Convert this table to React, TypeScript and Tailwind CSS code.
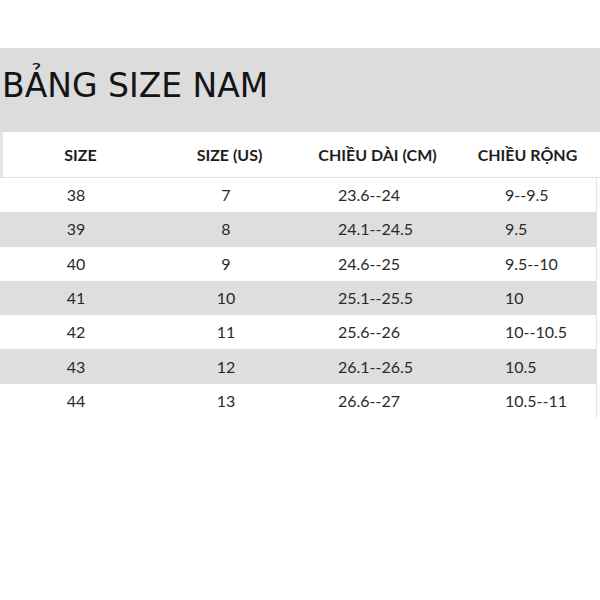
const rows = [
  ["38", "7", "23.6--24", "9--9.5"],
  ["39", "8", "24.1--24.5", "9.5"],
  ["40", "9", "24.6--25", "9.5--10"],
  ["41", "10", "25.1--25.5", "10"],
  ["42", "11", "25.6--26", "10--10.5"],
  ["43", "12", "26.1--26.5", "10.5"],
  ["44", "13", "26.6--27", "10.5--11"],
];

export default function App() {
  return (
    <div className="w-[600px] h-[600px] bg-white pt-[48px]">
      <div className="h-[84px] bg-[#dcdcdc] pl-[2px] pt-[18px]">
        <h1 className="text-[33px] leading-[40px] text-[#141414] font-['DejaVu_Sans',sans-serif]">
          BẢNG SIZE NAM
        </h1>
      </div>

      <div className="font-['Lato',sans-serif]">
        <div className="grid grid-cols-[152px_148px_155px_1fr] h-[46px] items-center border-b border-[#e2e2e2] border-l-[3px] border-l-[#e4e4e4] text-[16px] font-bold text-[#1e1e1e]">
          <div className="text-center pl-[3px]">SIZE</div>
          <div className="text-center pl-[1px]">SIZE (US)</div>
          <div className="text-center pr-[6px]">CHIỀU DÀI (CM)</div>
          <div className="text-center pr-[3px]">CHIỀU RỘNG</div>
        </div>

        {rows.map((r, i) => (
          <div
            key={r[0]}
            className={`grid grid-cols-[152px_148px_155px_1fr] h-[34.3px] items-center w-[597px] border-r border-[#e4e4e4] text-[16px] text-[#2a2a2a] ${
              i % 2 === 1 ? "bg-[#dedede]" : "bg-white"
            }`}
          >
            <div className="text-center">{r[0]}</div>
            <div className="text-center">{r[1]}</div>
            <div className="pl-[38px]">{r[2]}</div>
            <div className="pl-[50px]">{r[3]}</div>
          </div>
        ))}
      </div>
    </div>
  );
}
